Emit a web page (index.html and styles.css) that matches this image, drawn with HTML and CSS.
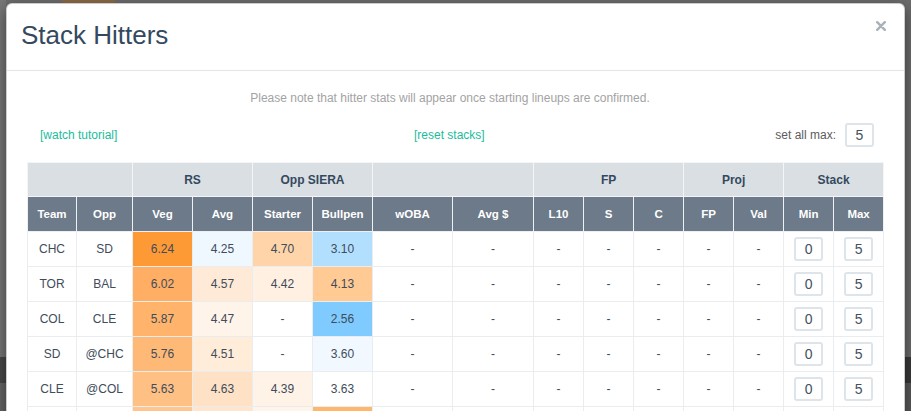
FILE: index.html
```html
<!DOCTYPE html>
<html lang="en">
<head>
<meta charset="utf-8">
<title>Stack Hitters</title>
<link rel="stylesheet" href="styles.css">
</head>
<body>
<div class="modal">
  <div class="modal-header">
    <h4 class="modal-title">Stack Hitters</h4>
    <button class="close" type="button" aria-label="Close">
      <svg width="10" height="10" viewBox="0 0 10 10"><path d="M1.2 1.2 8.8 8.8M8.8 1.2 1.2 8.8" stroke="#a9b1b9" stroke-width="2.4" stroke-linecap="round"/></svg>
    </button>
  </div>
  <div class="modal-body">
    <p class="note">Please note that hitter stats will appear once starting lineups are confirmed.</p>
    <div class="controls">
      <a class="link" href="#">[watch tutorial]</a>
      <a class="link" href="#">[reset stacks]</a>
      <label class="set-max">set all max: <input class="num" type="text" value="5"></label>
    </div>
    <table class="stack-table">
      <colgroup>
        <col class="c-team"><col class="c-opp">
        <col class="c-60"><col class="c-60"><col class="c-60"><col class="c-60">
        <col class="c-woba"><col class="c-avgd">
        <col class="c-50"><col class="c-50"><col class="c-50"><col class="c-50"><col class="c-50"><col class="c-50"><col class="c-50">
      </colgroup>
      <thead>
        <tr class="group-row">
          <th colspan="2"></th><th colspan="2">RS</th><th colspan="2">Opp SIERA</th><th colspan="2"></th><th colspan="3">FP</th><th colspan="2">Proj</th><th colspan="2">Stack</th>
        </tr>
        <tr class="col-row">
          <th>Team</th><th>Opp</th><th>Veg</th><th>Avg</th><th>Starter</th><th>Bullpen</th><th>wOBA</th><th>Avg $</th><th>L10</th><th>S</th><th>C</th><th>FP</th><th>Val</th><th>Min</th><th>Max</th>
        </tr>
      </thead>
      <tbody>
        <tr>
          <td>CHC</td><td>SD</td>
          <td style="background:#fe9a36">6.24</td><td style="background:#eff7ff">4.25</td><td style="background:#ffd4a9">4.70</td><td style="background:#b3dfff">3.10</td>
          <td>-</td><td>-</td><td>-</td><td>-</td><td>-</td><td>-</td><td>-</td>
          <td><input class="num" type="text" value="0"></td><td><input class="num" type="text" value="5"></td>
        </tr>
        <tr>
          <td>TOR</td><td>BAL</td>
          <td style="background:#ffae64">6.02</td><td style="background:#feead6">4.57</td><td style="background:#fff0e2">4.42</td><td style="background:#ffca93">4.13</td>
          <td>-</td><td>-</td><td>-</td><td>-</td><td>-</td><td>-</td><td>-</td>
          <td><input class="num" type="text" value="0"></td><td><input class="num" type="text" value="5"></td>
        </tr>
        <tr>
          <td>COL</td><td>CLE</td>
          <td style="background:#ffb36b">5.87</td><td style="background:#fff4ea">4.47</td><td>-</td><td style="background:#7fcaff">2.56</td>
          <td>-</td><td>-</td><td>-</td><td>-</td><td>-</td><td>-</td><td>-</td>
          <td><input class="num" type="text" value="0"></td><td><input class="num" type="text" value="5"></td>
        </tr>
        <tr>
          <td>SD</td><td>@CHC</td>
          <td style="background:#ffb977">5.76</td><td style="background:#ffecd9">4.51</td><td>-</td><td style="background:#f1f8ff">3.60</td>
          <td>-</td><td>-</td><td>-</td><td>-</td><td>-</td><td>-</td><td>-</td>
          <td><input class="num" type="text" value="0"></td><td><input class="num" type="text" value="5"></td>
        </tr>
        <tr>
          <td>CLE</td><td>@COL</td>
          <td style="background:#ffc084">5.63</td><td style="background:#ffe2c6">4.63</td><td style="background:#fff3e7">4.39</td><td>3.63</td>
          <td>-</td><td>-</td><td>-</td><td>-</td><td>-</td><td>-</td><td>-</td>
          <td><input class="num" type="text" value="0"></td><td><input class="num" type="text" value="5"></td>
        </tr>
        <tr class="row-cut">
          <td></td><td></td>
          <td style="background:#ffc58d"></td><td style="background:#ffe5cb"></td><td style="background:#fff4e9"></td><td style="background:#ffb76e"></td>
          <td></td><td></td><td></td><td></td><td></td><td></td><td></td><td></td><td></td>
        </tr>
      </tbody>
    </table>
  </div>
</div>
</body>
</html>
```

FILE: styles.css
```css
* {
  box-sizing: border-box;
}

html,
body {
  margin: 0;
  height: 100%;
  overflow: hidden;
}

body {
  font-family: "Liberation Sans", Arial, sans-serif;
  background:
    linear-gradient(#8b6b48, #8b6b48) 62px 0 / 53px 3px no-repeat,
    linear-gradient(to right, rgba(255, 255, 255, 0.08) 0 6px, transparent 6px),
    linear-gradient(to bottom, #6c6c6c 0 357px, #3a3a3a 357px 383px, #5a5a5a 383px);
}

.modal {
  margin: 3px 0 0 6px;
  width: 899px;
  min-height: 460px;
  background: #fff;
  border: 1px solid rgba(0, 0, 0, 0.2);
  border-radius: 6px;
  box-shadow: 0 5px 15px rgba(0, 0, 0, 0.5);
}

.modal-header {
  display: flex;
  justify-content: space-between;
  align-items: flex-start;
  padding: 17px 15px 20px 14px;
  border-bottom: 1px solid #e5e5e5;
}

.modal-title {
  margin: 0;
  font-size: 26px;
  line-height: 29px;
  font-weight: normal;
  color: #34495e;
}

.close {
  border: 0;
  background: none;
  padding: 0;
  margin: 0 3px 0 0;
  line-height: 0;
  cursor: pointer;
}

.modal-body {
  padding: 19px 21px 0 20px;
}

.note {
  margin: 0 10px 0 0;
  text-align: center;
  font-size: 12px;
  line-height: 17px;
  color: #a3a3a3;
}

.controls {
  margin-top: 16px;
  display: grid;
  grid-template-columns: 374px auto 1fr;
  align-items: center;
  padding: 0 9px 0 13px;
  font-size: 12px;
}

.link {
  color: #1abc9c;
  text-decoration: none;
}

.set-max {
  justify-self: end;
  display: flex;
  align-items: center;
  gap: 9px;
  color: #5c5c5c;
}

.num {
  width: 29px;
  height: 24px;
  padding: 0;
  border: 2px solid #dde4ea;
  border-radius: 3px;
  text-align: center;
  font-family: "Liberation Sans", Arial, sans-serif;
  font-size: 14px;
  color: #45515e;
  background: #fff;
}

.stack-table {
  margin-top: 15px;
  width: 856px;
  border-collapse: collapse;
  table-layout: fixed;
}

.c-team { width: 49px; }
.c-opp { width: 56px; }
.c-60 { width: 60px; }
.c-woba { width: 80px; }
.c-avgd { width: 81px; }
.c-50 { width: 50px; }

.stack-table th,
.stack-table td {
  padding: 0;
  text-align: center;
  vertical-align: middle;
}

.group-row th {
  height: 34px;
  background: #dadfe3;
  color: #34495e;
  font-size: 12px;
  font-weight: bold;
  border: 1px solid #f3f5f6;
}

.col-row th {
  height: 35px;
  background: #6c7a89;
  color: #fff;
  font-size: 11.5px;
  font-weight: bold;
  border: 1px solid #eef1f3;
}

.stack-table td {
  height: 35px;
  border: 1px solid #e9edf0;
  font-size: 12px;
  color: #404c5a;
}

.stack-table td .num {
  display: block;
  margin: 0 auto;
}
```
